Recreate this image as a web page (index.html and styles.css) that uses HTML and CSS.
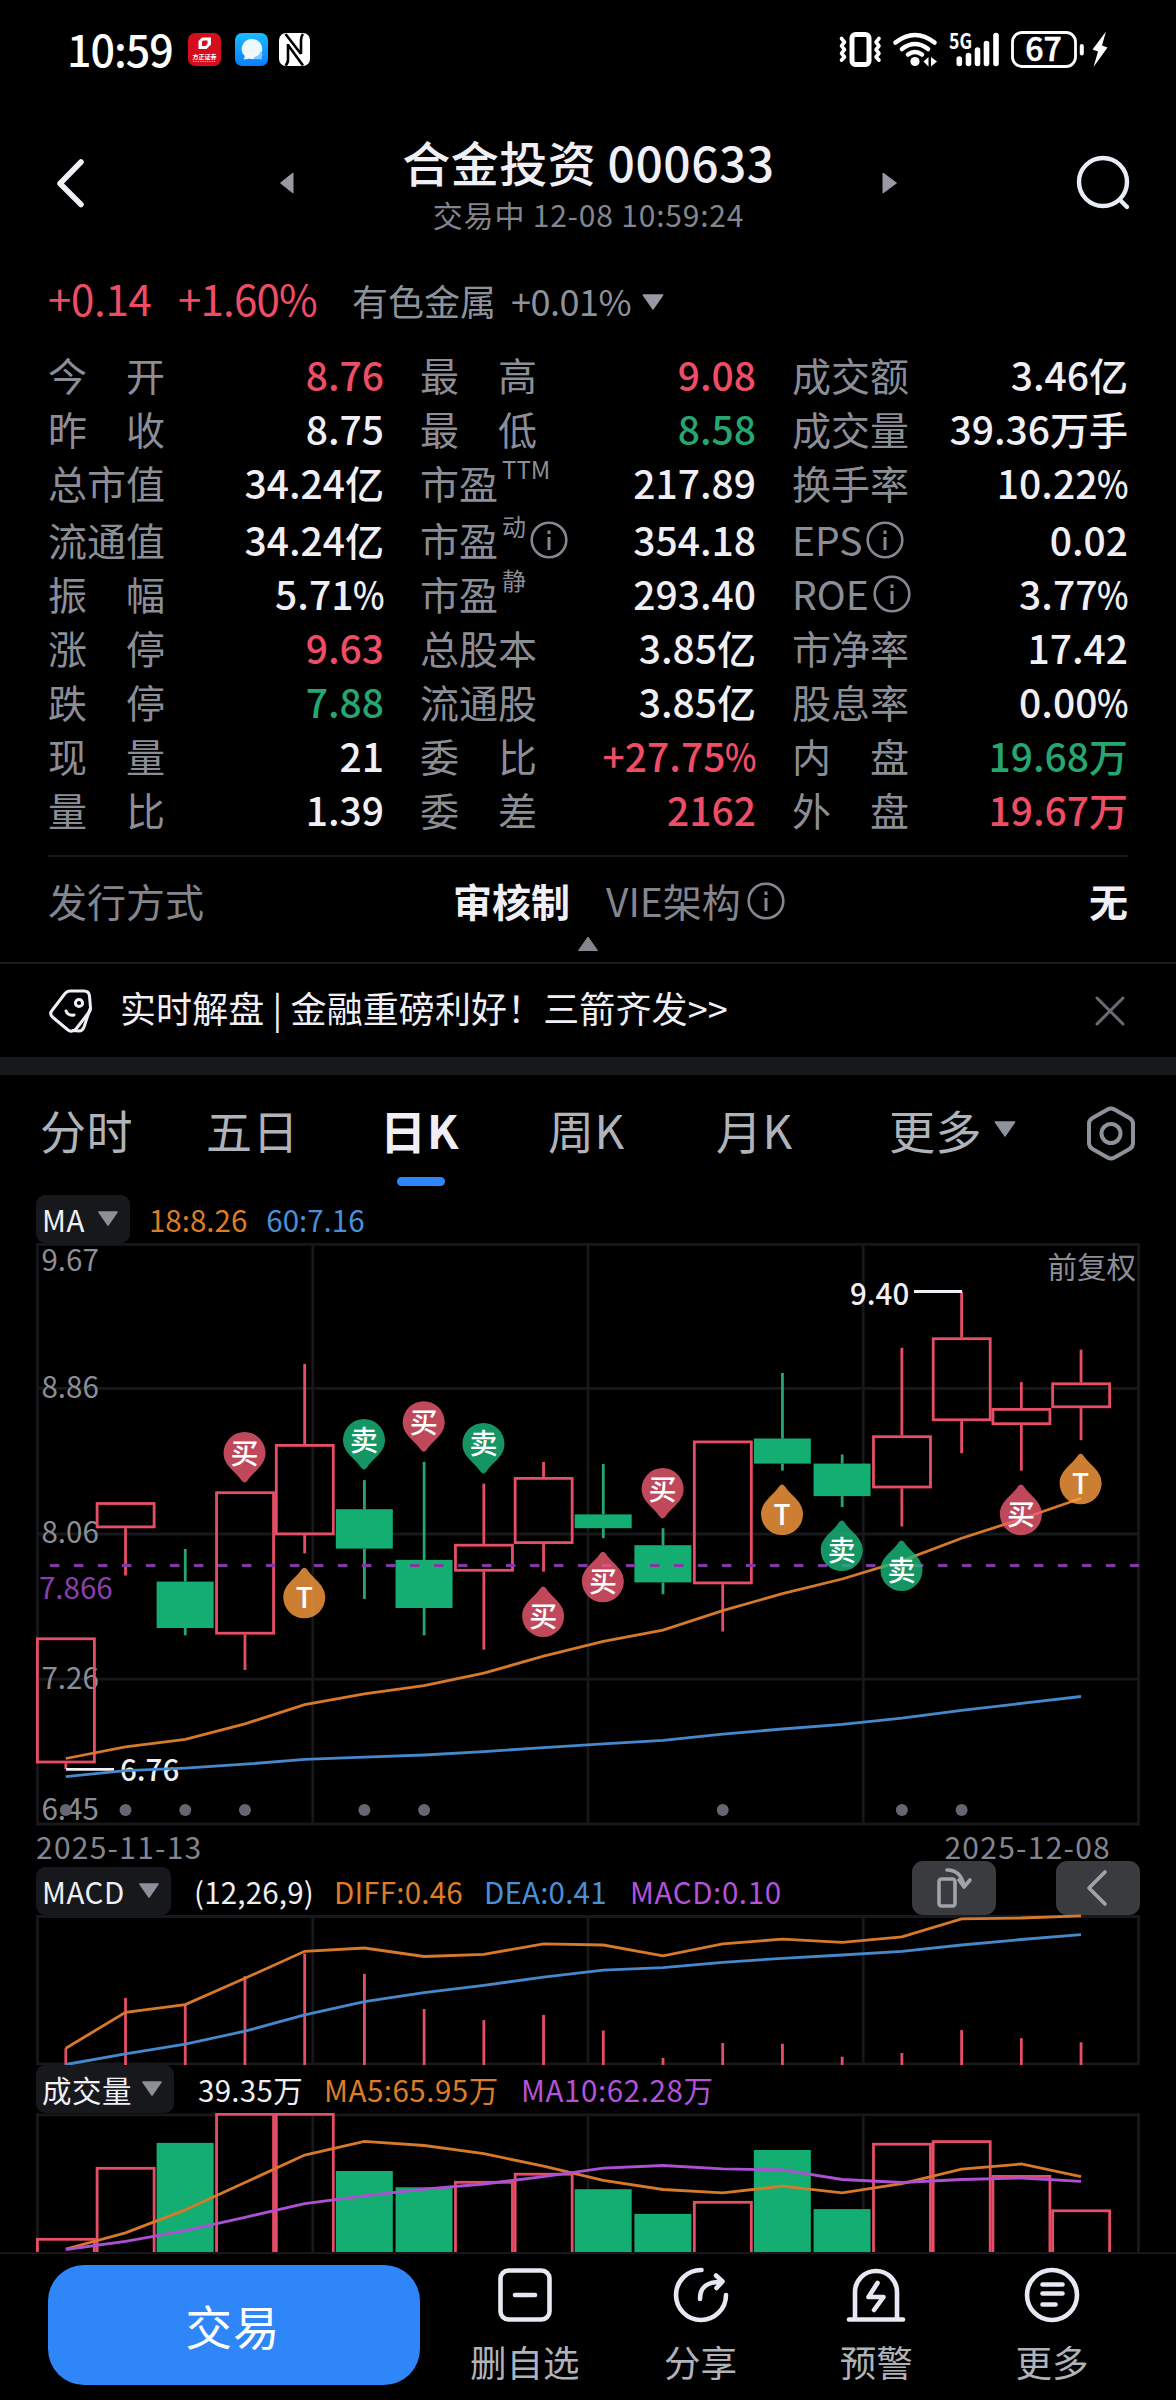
FILE: index.html
```html
<!DOCTYPE html>
<html lang="zh-CN">
<head>
<meta charset="utf-8">
<title>合金投资 000633</title>
<link rel="stylesheet" href="styles.css">
</head>
<body>
<svg class="defs" width="0" height="0">
  <symbol id="info" viewBox="0 0 38 38">
    <circle cx="19" cy="19" r="17.3" fill="none" stroke="currentColor" stroke-width="2.6"/>
    <path d="M19 16v13M19 9.5v3.4" stroke="currentColor" stroke-width="3" fill="none"/>
  </symbol>
  <symbol id="down" viewBox="0 0 22 16">
    <path d="M2 1h18L11 14z" fill="currentColor" stroke="currentColor" stroke-width="1.6" stroke-linejoin="round"/>
  </symbol>
</svg>
<main class="app">
  <div class="status">
    <span class="clock">10:59</span>
    <svg class="tray" width="124" height="36" viewBox="0 0 124 36">
      <defs>
        <linearGradient id="sky" x1="0" y1="0" x2="0" y2="1"><stop offset="0" stop-color="#19bcff"/><stop offset="1" stop-color="#0b7dff"/></linearGradient>
      </defs>
      <rect x="1" y="1" width="33" height="33" rx="7" fill="#d50d1c"/>
      <path d="M11.500 9l3.500-3.500h9v7l-4.500 4.500h-8zM15 9.500v4.500h3.500l2-2.300V8.500h-4z" fill="#fff" fill-rule="evenodd"/>
      <text x="17.500" y="26.500" text-anchor="middle" font-size="6" font-weight="700" fill="#fff">方正证券</text>
      <path d="M6 29.500h23" stroke="#f0a0a0" stroke-width="1.200" stroke-dasharray="1.500 .8"/>
      <rect x="48" y="1" width="33" height="33" rx="7" fill="url(#sky)"/>
      <path d="M64.500 7a10.500 10 0 1 1-3 19.500c-1.500.8-3.500 1-5 .7.9-.9 1.300-2 1.200-3.200A10.400 10 0 0 1 64.500 7z" fill="#eef8ff"/>
      <path d="M73.500 19a5 5 0 0 1 1 6.500c.1.900.4 1.500.9 2-1 .1-2-.1-2.900-.5-2.500.5-5-.3-6.500-2 4 0 7-2.500 7.500-6z" fill="#7cc9ff"/>
      <rect x="92" y="1" width="31" height="33" rx="7" fill="#fff"/>
      <path d="M98.500 2L114 22M101 13L116 33.500M101 12v15.500q0 4-2.500 6M114 22V8q0-3.500 2-6" fill="none" stroke="#000" stroke-width="2.600"/>
    </svg>
    <span class="grow"></span>
    <svg class="signals" width="274" height="40" viewBox="838 30 274 40" fill="none" stroke="#fff" stroke-linecap="round" stroke-linejoin="round">
      <rect x="852" y="34.500" width="17" height="30" rx="3.500" stroke-width="5"/>
      <path d="M841.500 38.500l3 3.700-3 3.700 3 3.700-3 3.700 3 3.700-3 3.200M879 38.500l-3 3.700 3 3.700-3 3.700 3 3.700-3 3.700 3 3.200" stroke-width="3.600"/>
      <path d="M895.500 42.500q19.500-15 39 0M902 49q13-10 26 0M908 54.500q7-5 14 0" stroke-width="4.600"/>
      <circle cx="915" cy="61.500" r="4.600" fill="#fff" stroke="none"/>
      <path d="M923.500 61.500l5-4.500v9.500zM937 61.500l-6-4.500v9.500z" fill="#fff" stroke="none"/>
      <path d="M959.300 59v4.500M968.500 55.500v8M977.500 50v13.500M986.500 43.500v20M996 35.500v28" stroke-width="5.600"/>
      <rect x="1012.500" y="32.500" width="63" height="34" rx="9.500" stroke-width="2.800"/>
      <path d="M1081.800 46v7.500" stroke-width="4"/>
      <path d="M1106 31.500l-13.500 18 5.500 2-4.500 15.500 14-19.500-5.500-2z" fill="#fff" stroke="none"/>
      <text x="949" y="49" font-size="21" font-weight="700" fill="#fff" stroke="none" textLength="23" lengthAdjust="spacingAndGlyphs">5G</text>
      <text x="1043.500" y="61" font-size="32" font-weight="500" fill="#fff" stroke="#fff" stroke-width=".6" text-anchor="middle">67</text>
    </svg>
  </div>

  <header class="head">
    <svg width="32" height="56" viewBox="0 0 32 56" fill="none" stroke="#f0eff6" stroke-width="5.500" stroke-linecap="round" stroke-linejoin="round"><path d="M28 7L7 28.500 28 49.500"/></svg>
    <svg class="tri-l" width="16" height="24" viewBox="0 0 16 24"><path d="M14 2v20L1.500 12z" fill="#9899a5" stroke="#9899a5" stroke-linejoin="round"/></svg>
    <div class="title">
      <h1>合金投资 000633</h1>
      <p>交易中 12-08 10:59:24</p>
    </div>
    <svg class="tri-r" width="16" height="24" viewBox="0 0 16 24"><path d="M1 2v20l13.500-10z" fill="#9899a5" stroke="#9899a5" stroke-linejoin="round"/></svg>
    <svg class="search" width="60" height="60" viewBox="0 0 60 60" fill="none" stroke="#e9edf8" stroke-width="4.400" stroke-linecap="round"><circle cx="29" cy="30" r="24"/><path d="M46 48l7 7"/></svg>
  </header>

  <section class="change">
    <span class="red big">+0.14</span><span class="red big pct">+1.60%</span>
    <span class="sector">有色金属</span><span class="sector sp">+0.01%</span>
    <svg class="tri" width="24" height="17"><use href="#down"/></svg>
  </section>

  <section class="quote">
    <dl>
      <div><dt>今 开</dt><dd class="red">8.76</dd></div>
      <div><dt>昨 收</dt><dd>8.75</dd></div>
      <div><dt>总市值</dt><dd>34.24亿</dd></div>
      <div class="tall"><dt>流通值</dt><dd>34.24亿</dd></div>
      <div><dt>振 幅</dt><dd>5.71<i>%</i></dd></div>
      <div><dt>涨 停</dt><dd class="red">9.63</dd></div>
      <div><dt>跌 停</dt><dd class="green">7.88</dd></div>
      <div><dt>现 量</dt><dd>21</dd></div>
      <div><dt>量 比</dt><dd>1.39</dd></div>
    </dl>
    <dl>
      <div><dt>最 高</dt><dd class="red">9.08</dd></div>
      <div><dt>最 低</dt><dd class="green">8.58</dd></div>
      <div><dt class="nat">市盈<sup>TTM</sup></dt><dd>217.89</dd></div>
      <div class="tall"><dt class="nat">市盈<sup>动</sup><svg class="i"><use href="#info"/></svg></dt><dd>354.18</dd></div>
      <div><dt class="nat">市盈<sup>静</sup></dt><dd>293.40</dd></div>
      <div><dt>总股本</dt><dd>3.85亿</dd></div>
      <div><dt>流通股</dt><dd>3.85亿</dd></div>
      <div><dt>委 比</dt><dd class="red">+27.75<i>%</i></dd></div>
      <div><dt>委 差</dt><dd class="red">2162</dd></div>
    </dl>
    <dl>
      <div><dt>成交额</dt><dd>3.46亿</dd></div>
      <div><dt>成交量</dt><dd>39.36万手</dd></div>
      <div><dt>换手率</dt><dd>10.22<i>%</i></dd></div>
      <div class="tall"><dt class="nat">EPS<svg class="i"><use href="#info"/></svg></dt><dd>0.02</dd></div>
      <div><dt class="nat">ROE<svg class="i"><use href="#info"/></svg></dt><dd>3.77<i>%</i></dd></div>
      <div><dt>市净率</dt><dd>17.42</dd></div>
      <div><dt>股息率</dt><dd>0.00<i>%</i></dd></div>
      <div><dt>内 盘</dt><dd class="green">19.68万</dd></div>
      <div><dt>外 盘</dt><dd class="red">19.67万</dd></div>
    </dl>
  </section>

  <section class="issue">
    <div class="pair"><span>发行方式</span><b>审核制</b></div>
    <div class="pair"><span class="vie">VIE架构<svg class="i"><use href="#info"/></svg></span><b>无</b></div>
  </section>
  <div class="fold"><svg width="24" height="17" viewBox="0 0 24 17"><path d="M12 2l9.500 13.500h-19z" fill="#85868f" stroke="#85868f" stroke-linejoin="round"/></svg></div>

  <section class="notice">
    <svg width="46" height="48" viewBox="0 0 46 48" fill="none" stroke="#f0eff6" stroke-width="3" stroke-linejoin="round" stroke-linecap="round">
      <path d="M22 4h14q5 0 5.500 5l1 12q.2 2-1 3.500L28 42q-4 4-8 1L5 30.500q-4-3.500-1-7L17 6.500q2-2.500 5-2.500z"/>
      <path d="M42 22l-6 18q-1.500 4-5 4l-6-.5"/>
      <circle cx="31" cy="16" r="3.600"/><path d="M18 24q2 5 8 4"/>
    </svg>
    <span>实时解盘 | 金融重磅利好！三箭齐发&gt;&gt;</span>
    <svg class="close" width="34" height="34" viewBox="0 0 34 34" stroke="#6a6c75" stroke-width="3" stroke-linecap="round"><path d="M4 4l26 26M30 4L4 30"/></svg>
  </section>

  <nav class="tabs">
    <span>分时</span><span>五日</span><span class="on">日K</span><span>周K</span><span>月K</span>
    <span class="more">更多<svg width="24" height="17"><use href="#down"/></svg></span>
    <svg width="54" height="58" viewBox="0 0 54 58" fill="none" stroke="#8e929a" stroke-width="4" stroke-linejoin="round"><path d="M23.500 4.500q3.500-2 7 0l15 8.500q3.500 2 3.500 6v19q0 4-3.500 6l-15 8.500q-3.500 2-7 0l-15-8.500Q5 42 5 38V19q0-4 3.500-6z"/><circle cx="27" cy="28.500" r="9.500"/></svg>
  </nav>

  <section class="charts">
    <div class="legend first"><button class="chip">MA<svg width="22" height="16"><use href="#down"/></svg></button><span class="o g1">18:8.26</span><span class="b g1">60:7.16</span></div>
    <svg id="kline" width="1176" height="582" viewBox="0 1243 1176 582"></svg>
    <div class="dates"><span>2025-11-13</span><span>2025-12-08</span></div>
    <div class="legend macd"><button class="chip">MACD<svg width="22" height="16"><use href="#down"/></svg></button><span class="w">(12,26,9)</span><span class="o">DIFF:0.46</span><span class="b">DEA:0.41</span><span class="p">MACD:0.10</span>
      <button class="tool rot"><svg width="38" height="44" viewBox="0 0 38 44" fill="none" stroke="#a2a3a9" stroke-width="3.600" stroke-linecap="round" stroke-linejoin="round"><rect x="4" y="13" width="16" height="27" rx="2.500"/><path d="M12 4q14 0 17 16M24 14l5 7 6-7"/></svg></button>
      <button class="tool"><svg width="26" height="38" viewBox="0 0 26 38" fill="none" stroke="#a2a3a9" stroke-width="3.600" stroke-linecap="round" stroke-linejoin="round"><path d="M20 3L4 19l16 16"/></svg></button>
    </div>
    <svg id="macd" width="1176" height="150" viewBox="0 1915 1176 150"></svg>
    <div class="legend vol"><button class="chip">成交量<svg width="22" height="16"><use href="#down"/></svg></button><span class="w">39.35万</span><span class="o">MA5:65.95万</span><span class="p">MA10:62.28万</span></div>
    <svg id="volume" class="clip" width="1176" height="139" viewBox="0 2113 1176 139"></svg>
  </section>

  <footer class="bar">
    <button class="trade">交易</button>
    <div class="act"><svg viewBox="0 0 60 60"><rect x="5.500" y="5.500" width="49" height="49" rx="8"/><path d="M20 30h20"/></svg><span>删自选</span></div>
    <div class="act"><svg viewBox="0 0 60 60"><path d="M30.500 5A25 25 0 1 0 55 30M29 34q0-18 22-17M45 10.500l6.500 6-6 6.500"/></svg><span>分享</span></div>
    <div class="act"><svg viewBox="0 0 60 60"><path d="M9 53V27a21 21 0 0 1 42 0v26M3 54.500h54M31.500 18L22.500 32h15L28 45"/></svg><span>预警</span></div>
    <div class="act"><svg viewBox="0 0 60 60"><circle cx="30" cy="30" r="25"/><path d="M20.500 19.500h20M20.500 28.500h20M20.500 39.500h13"/></svg><span>更多</span></div>
  </footer>
</main>
<script src="chart.js"></script>
</body>
</html>
```
FILE: styles.css
```css
* { box-sizing: border-box; }
body { margin: 0; background: #000; }
.app {
  width: 1176px; height: 2400px; overflow: hidden;
  display: flex; flex-direction: column;
  background: #000; color: #f0eff6;
  font-family: "Noto Sans CJK SC", "Noto Sans", sans-serif;
}
.app > * { flex: none; }
.defs { position: absolute; }
svg { display: block; overflow: visible; }
svg.clip { overflow: hidden; }
h1, p, dl, dd, dt { margin: 0; font-weight: inherit; }
button { border: 0; padding: 0; color: inherit; font: inherit; }
.grow { flex: 1; }
.red { color: #ef4d66 !important; }
.green { color: #26a671 !important; }

.status { height: 100px; padding: 0 64px 0 67px; display: flex; align-items: center; }
.clock { width: 120px; font-size: 43px; line-height: 60px; font-weight: 500; color: #fff; letter-spacing: -1px; margin-top: -5px; }

.head { height: 162px; padding: 0 42px 0 53px; display: flex; align-items: flex-start; }
.head > svg:first-child { margin-top: 55px; }
.tri-l { margin: 71px 0 0 194px; }
.title { width: 588px; text-align: center; padding-top: 25px; }
.title h1 { font-size: 48px; line-height: 72px; font-weight: 500; letter-spacing: .5px; }
.title p { font-size: 30px; line-height: 40px; color: #83868f; letter-spacing: .8px; margin-top: -3px; }
.tri-r { margin-top: 71px; }
.search { margin: 52px 0 0 176px; }

.change { height: 87px; padding: 0 48px 12px; display: flex; align-items: center; line-height: 60px; }
.change span, .change svg { flex: none; }
.big { font-size: 42px; width: 130px; letter-spacing: -.3px; }
.pct { width: 174px; letter-spacing: -.8px; }
.change .red { margin-top: -3px; }
.sector { font-size: 36px; color: #8e929a; width: 159px; }
.sp { width: 130px; margin-left: 0; letter-spacing: -.5px; }
.tri { color: #9899a5; margin-top: 6px; }

.quote { display: flex; gap: 36px; padding: 0 46px 0 48px; font-size: 39px; height: 508px; margin-top: -2px; }
.quote dl { width: 336px; }
.quote dl div { display: flex; justify-content: space-between; height: 54px; line-height: 54px; }
.quote dl .tall { height: 57px; padding-top: 3px; }
.quote dt { width: 117px; color: #8b8e96; text-align-last: justify; white-space: nowrap; }
.quote dt.nat { text-align-last: left; display: flex; }
.quote dd { font-weight: 500; white-space: nowrap; }
.quote dd i { display: inline-block; font-style: normal; transform: scaleX(.86); transform-origin: 0 50%; margin-right: -6px; }
sup { font-size: 24px; line-height: 28px; height: 28px; margin: 0 0 0 4px; }
.i { width: 38px; height: 38px; flex: none; margin: 9px 0 0 4px; color: #85868f; }

.issue { margin: 0 48px; border-top: 2px solid #18191c; height: 78px; display: flex; font-size: 39px; color: #83868f; line-height: 54px; padding-top: 16px; }
.issue .pair { display: flex; justify-content: space-between; width: 522px; }
.issue .pair:first-child { margin-right: 36px; }
.issue .vie { display: flex; }
.issue .i { margin-left: 6px; }
.issue b { font-weight: 700; color: #f0eff6; }
.fold { height: 29px; display: flex; justify-content: center; padding-top: 2px; }

.notice { border-top: 2px solid #1a1b1e; border-bottom: 18px solid #17181c; height: 113px; padding: 0 49px 0 48px; display: flex; align-items: center; font-size: 36px; }
.notice span { margin-left: 26px; flex: 1; line-height: 50px; margin-top: -8px; color: #f0eff6; white-space: pre; letter-spacing: .1px; }

.tabs { height: 120px; padding-left: 40px; display: grid; grid-template-columns: 166px 177px 165px 168px 173px 194px 60px; align-items: start; font-size: 46px; line-height: 68px; color: #b0b3ba; letter-spacing: .6px; }
.tabs > * { margin-top: 20px; }
.tabs > svg { margin: 30px 0 0 1px; }
.tabs .on { width: 84px; height: 91px; font-weight: 700; color: #f0eff6; position: relative; margin-left: -3px; letter-spacing: 1px; }
.tabs .on::after { content: ""; position: absolute; left: 17px; bottom: 0; width: 48px; height: 9px; border-radius: 5px; background: #2e86f8; }
.more { display: flex; align-items: center; gap: 11px; }
.more svg { color: #8e929a; }

.charts { height: 1057px; overflow: hidden; display: flex; flex-direction: column; font-size: 29.500px; }
.charts > * { flex: none; }
.legend { height: 48px; padding: 0 36px; display: flex; align-items: flex-end; line-height: 44px; white-space: nowrap; }
.legend span { padding-top: 2px; height: 48px; }
.chip { height: 48px; padding: 0 11px 0 6px; border-radius: 9px; background: #17181c; display: flex; align-items: center; justify-content: space-between; line-height: 42px; color: #f0eff6; letter-spacing: .5px; }
.chip svg { color: #8e8f99; }
.first .chip { width: 94px; }
.first .g1 { margin-left: 19px; }
.macd .chip { width: 135px; }
.macd .w { margin-left: 23px; width: 140px; letter-spacing: .2px; }
.macd .o { width: 150px; letter-spacing: .2px; }
.macd .b { width: 146px; letter-spacing: .2px; }
.macd .p { width: 282px; letter-spacing: .6px; }
.vol .chip { width: 138px; }
.vol .w { margin-left: 24px; width: 126px; letter-spacing: .3px; }
.vol .o { width: 197px; letter-spacing: .5px; }
.vol .p { letter-spacing: .6px; }
.o { color: #dd7d27; }
.b { color: #4a90d9; }
.p { color: #b253da; }
.w { color: #f0eff6; }
.dates { height: 42px; padding: 0 65px 0 36px; display: flex; justify-content: space-between; font-size: 30px; line-height: 42px; letter-spacing: 1.250px; color: #83868f; }
.tool { width: 84px; height: 54px; border-radius: 11px; background: #3a3b3f; display: flex; align-items: center; justify-content: center; flex: none; }
.rot { margin-right: 60px; }

.bar { height: 148px; border-top: 2px solid #17181c; padding: 11px 36px 0 48px; display: flex; }
.trade { width: 372px; height: 120px; border-radius: 36px; background: #2e86f8; color: #fff; font-size: 46.500px; line-height: 114px; letter-spacing: 1px; margin-right: 17px; padding-right: 2px; }
.act { width: 175.700px; display: flex; flex-direction: column; align-items: center; font-size: 36.500px; line-height: 50px; color: #b0b3ba; }
.act svg { width: 60px; height: 60px; fill: none; stroke: #e6e9f3; stroke-width: 4.600; stroke-linecap: round; stroke-linejoin: round; }
.act span { margin-top: 12px; }

.pin { font-size: 28px; fill: #fff; text-anchor: middle; font-weight: 500; }
.axis { font-size: 29.500px; fill: #8b8e96; }
.ref { fill: #8b3fae; }
.peak { font-size: 29.500px; fill: #f0eff6; font-weight: 500; }
```
FILE: chart.js
```js
const RED = '#e64e66', GREEN = '#14ae72', STEM = '#26a671';
const X = i => 65.8 + i * 59.72;

// [up, body top, body bottom, high, low]
const candles = [
  [1,1637.5,1763.3,0,1769],[1,1502.2,1528.2,0,1575.5],[0,1581.6,1628,1549,1635.4],
  [1,1491.4,1634.5,0,1670],[1,1444.1,1535.2,1363.9,1553.4],[0,1509.2,1548.6,1480.1,1598.9],
  [0,1559.9,1608,1461.9,1635.4],[1,1543.9,1571.6,1483.6,1649.7],[1,1477.1,1543.9,1461.9,1571.6],
  [0,1514.4,1528.2,1464,1538.2],[0,1545.2,1582.4,1528.2,1594.2],[1,1440.6,1584.2,0,1631.5],
  [0,1438.5,1463.6,1373,1470.6],[0,1463.6,1496.1,1454.5,1507],[1,1435.4,1488.3,1347.8,1526.5],
  [1,1337.4,1421.1,1291.5,1453.2],[1,1408.1,1425,1382.1,1470.6],[1,1382.5,1408.1,1349.6,1440.2]
];
const ma18 = [1758.5,1746.8,1739.4,1723.8,1704.7,1693.9,1685.7,1673.1,1656.2,1641.4,1630.1,1610.6,1593.7,1579,1560.8,1538.2,1519,1498.3];
const ma60 = [1776.7,1770.7,1768.1,1764.2,1759.4,1757.2,1755,1751.6,1747.7,1743.8,1740.3,1734.2,1729,1724.3,1718.2,1710.4,1703.4,1696.5];
// [index, label, direction the tip points, top]
const pins = [
  [3,'买',1,1432],[5,'卖',1,1419],[6,'买',1,1401.2],[7,'卖',1,1422.9],[10,'买',1,1468],
  [4,'T',-1,1567.6],[8,'买',-1,1586.3],[9,'买',-1,1551.6],[12,'T',-1,1484.4],
  [13,'卖',-1,1520.4],[14,'卖',-1,1540.3],[16,'买',-1,1484.4],[17,'T',-1,1453.6]
];
const pinColor = { '买': '#ef5b72', '卖': '#1aba7c', 'T': '#ff9f40' };

const line = (pts, c, w) => `<polyline points="${pts.map((y, i) => X(i) + ',' + y).join(' ')}" fill="none" stroke="${c}" stroke-width="${w || 2.8}"/>`;
const seg = (x1, y1, x2, y2, c, w, extra) => `<line x1="${x1}" y1="${y1}" x2="${x2}" y2="${y2}" stroke="${c}" stroke-width="${w}" ${extra || ''}/>`;
const text = (x, y, cls, s, extra) => `<text x="${x}" y="${y}" class="${cls}" ${extra || ''}>${s}</text>`;
const body = (i, up, top, bottom) => up
  ? `<rect x="${X(i) - 28.4}" y="${top + 1.3}" width="57" height="${bottom - top - 2.6}" fill="none" stroke="${RED}" stroke-width="2.8"/>`
  : `<rect x="${X(i) - 28.6}" y="${top}" width="57" height="${bottom - top}" fill="${GREEN}"/>`;
function frame(top, bottom, rows) {
  let s = '';
  for (let i = 0; i < 5; i++) s += seg(37.5 + i * 275.25, top, 37.5 + i * 275.25, bottom, '#17181c', 2.8);
  rows.forEach(y => s += seg(36.5, y, 1139.5, y, '#17181c', 2.8));
  return s;
}

let k = frame(1243, 1825, [1244.3, 1388.3, 1534, 1679.2, 1824]);
[['9.67',1271],['8.86',1398],['8.06',1543.4],['7.26',1688.7],['6.45',1820]].forEach(([s, y]) => k += text(41.5, y, 'axis', s));
k += text(1136, 1278, 'axis', '前复权', 'text-anchor="end"');
candles.forEach(([up, t, b, h, l], i) => {
  const c = up ? RED : STEM;
  if (h) k += seg(X(i), h, X(i), t, c, 2.8);
  k += seg(X(i), b, X(i), l, c, 2.8);
  k += body(i, up, t, b);
});
k += seg(50, 1565.5, 1139, 1565.5, '#8138a3', 3, 'stroke-dasharray="9.4 14.6"');
k += text(39, 1599, 'axis ref', '7.866');
k += text(120, 1781, 'peak', '6.76') + seg(66, 1769.3, 114, 1769.3, '#f0eff6', 2.8);
k += text(850, 1304.5, 'peak', '9.40') + seg(914, 1291.5, 962, 1291.5, '#f0eff6', 2.8);
k += line(ma18, '#d6792a') + line(ma60, '#4588cc');
[0,1,2,3,5,6,11,14,15].forEach(i => k += `<circle cx="${X(i)}" cy="1810" r="6" fill="#656672"/>`);
pins.forEach(([i, s, dir, top]) => {
  const cy = dir > 0 ? top + 21 : top + 29.7;
  k += `<g transform="translate(${X(i) - .4} ${cy})"><path transform="scale(1 ${dir})" d="M-21 0a21 21 0 0 1 42 0c0 13-13 19-18 27.500q-3 4-6 0C-8 19-21 13-21 0z" fill="${pinColor[s]}" opacity=".8"/>`
    + text(0, 10.5, 'pin', s) + '</g>';
});
document.getElementById('kline').innerHTML = k;

const diff = [2048.2,2012.4,2004.6,1978.3,1951.3,1948,1956.5,1954.3,1943.9,1945,1955.8,1943.9,1939.1,1942.4,1936.9,1918.8,1918,1915.8];
const dea = [2064.5,2053.8,2044.2,2031.2,2014.9,2001.6,1992.7,1985.3,1977.2,1970.2,1967.6,1962.4,1958.3,1955,1951.3,1945,1939.5,1934.7];
const hist = [2048.2,1997.9,2004.6,1976.1,1953.5,1973.9,2009,2020.1,2014.9,2030.5,2057.9,2043,2043.8,2056.7,2053,2030.1,2038.2,2042.3];
document.getElementById('macd').innerHTML = frame(1915, 2065, [1916.5, 2063.8])
  + hist.map((y, i) => seg(X(i), y, X(i), 2065, RED, 2.8)).join('') + line(diff, '#d6792a') + line(dea, '#4588cc');

const vols = [2238,2167,2142.9,2113,2113,2171,2187.3,2181,2172.9,2189.2,2213.9,2201,2150,2209.1,2142.9,2140.3,2175.1,2209.5];
const v5 = [2249,2232.8,2209.9,2182.5,2155.1,2141.4,2145.5,2153.7,2166.2,2180.3,2189.5,2192.9,2186.2,2192.9,2183.6,2169.2,2164,2176.6];
const v10 = [2249.5,2241.3,2230.6,2217.3,2203.6,2195.8,2189.2,2184,2176.6,2168.1,2165.5,2168.8,2169.9,2179.5,2182.5,2179.5,2178,2181.4];
document.getElementById('volume').innerHTML = frame(2113, 2252, [2114.8])
  + vols.map((y, i) => body(i, candles[i][0], y, 2262)).join('') + line(v5, '#d6792a') + line(v10, '#ad50d3', 2.8);
```
